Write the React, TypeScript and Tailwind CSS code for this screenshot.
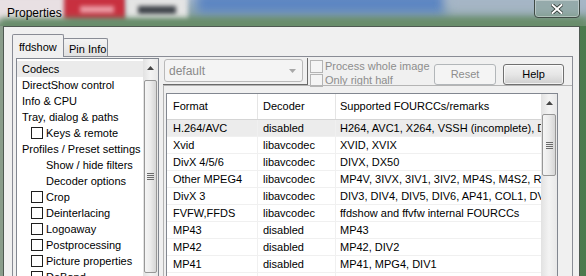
import React from 'react';

type NavItem = { label: string; kind: 'plain' | 'check' | 'sub'; selected?: boolean };

const navItems: NavItem[] = [
  { label: 'Codecs', kind: 'plain', selected: true },
  { label: 'DirectShow control', kind: 'plain' },
  { label: 'Info & CPU', kind: 'plain' },
  { label: 'Tray, dialog & paths', kind: 'plain' },
  { label: 'Keys & remote', kind: 'check' },
  { label: 'Profiles / Preset settings', kind: 'plain' },
  { label: 'Show / hide filters', kind: 'sub' },
  { label: 'Decoder options', kind: 'sub' },
  { label: 'Crop', kind: 'check' },
  { label: 'Deinterlacing', kind: 'check' },
  { label: 'Logoaway', kind: 'check' },
  { label: 'Postprocessing', kind: 'check' },
  { label: 'Picture properties', kind: 'check' },
  { label: 'DeBand', kind: 'check' },
];

const codecs = [
  ['H.264/AVC', 'disabled', 'H264, AVC1, X264, VSSH (incomplete), DAVC, PAVC'],
  ['Xvid', 'libavcodec', 'XVID, XVIX'],
  ['DivX 4/5/6', 'libavcodec', 'DIVX, DX50'],
  ['Other MPEG4', 'libavcodec', 'MP4V, 3IVX, 3IV1, 3IV2, MP4S, M4S2, RMP4, DIVX'],
  ['DivX 3', 'libavcodec', 'DIV3, DIV4, DIV5, DIV6, AP41, COL1, DVX3'],
  ['FVFW,FFDS', 'libavcodec', 'ffdshow and ffvfw internal FOURCCs'],
  ['MP43', 'disabled', 'MP43'],
  ['MP42', 'disabled', 'MP42, DIV2'],
  ['MP41', 'disabled', 'MP41, MPG4, DIV1'],
  ['', '', ''],
];

const UpArrow = () => (
  <svg width="7" height="4" viewBox="0 0 7 4">
    <path d="M0 4 L3.5 0 L7 4 Z" fill="#454545" />
  </svg>
);

const Grip = () => (
  <div className="flex flex-col gap-[1px]">
    <div className="w-[7px] h-[1px] bg-[#6b6b6b]" />
    <div className="w-[7px] h-[1px] bg-[#6b6b6b]" />
    <div className="w-[7px] h-[1px] bg-[#6b6b6b]" />
    <div className="w-[7px] h-[1px] bg-[#6b6b6b]" />
  </div>
);

// win7 style vertical scrollbar, thumb geometry passed as full class strings
const VScroll = ({ thumbClass, width }: { thumbClass: string; width: string }) => (
  <div className={`${width} shrink-0 self-stretch flex flex-col bg-gradient-to-r from-[#e2e2e2] via-[#f3f3f3] to-[#e8e8e8]`}>
    <div className="h-[18px] flex items-center justify-center">
      <UpArrow />
    </div>
    <div
      className={`${thumbClass} mx-[1px] rounded-[2px] border border-[#979797] bg-gradient-to-r from-[#f5f5f5] via-[#ebebeb] to-[#d6d6d6] flex items-center justify-center`}
    >
      <Grip />
    </div>
  </div>
);

const Checkbox = ({ disabled }: { disabled?: boolean }) => (
  <div
    className={
      disabled
        ? 'w-[13px] h-[13px] shrink-0 border border-[#b4b4b4] bg-[#f4f4f4]'
        : 'w-[12px] h-[12px] shrink-0 border border-[#1e1e1e] bg-white'
    }
  />
);

export default function App() {
  return (
    <div
      className="relative w-[586px] h-[276px] overflow-hidden flex flex-col bg-[#6e8f70]"
      style={{ fontFamily: '"Liberation Sans", Arial, sans-serif' }}
    >
      {/* aero glass title bar, blurred desktop behind it */}
      <div className="relative h-[26px] shrink-0 overflow-hidden bg-gradient-to-b from-[#a9b9c9] via-[#8ea6a6] to-[#6f9071]">
        <div className="absolute left-[-10px] top-[-6px] w-[78px] h-[28px] bg-[#e8e0e3] blur-[3px]" />
        <div className="absolute left-[64px] top-[-4px] w-[62px] h-[24px] bg-[#c8303f] blur-[2px]" />
        <div className="absolute left-[80px] top-[6px] w-[34px] h-[7px] bg-[#ea9aa4] blur-[2px]" />
        <div className="absolute left-[126px] top-[-4px] w-[62px] h-[24px] bg-[#e4e4e4] blur-[2px]" />
        <div className="absolute left-[138px] top-[6px] w-[38px] h-[8px] bg-[#3f434a] blur-[2px]" />
        <div className="absolute left-[196px] top-[-8px] w-[250px] h-[22px] bg-[#5a84c2] blur-[6px]" />
        <div className="absolute left-[446px] top-[-8px] w-[150px] h-[20px] bg-[#a5b5c5] blur-[6px]" />
        <div className="absolute left-0 top-[18px] w-[586px] h-[14px] bg-[#698d6b] blur-[3px]" />
        <div className="relative h-full flex items-center pl-[7px] pb-[1px] text-[12px] text-black">Properties</div>
        <div className="absolute top-[-1px] left-[534px] w-[46px] h-[19px] rounded-b-[4px] border border-[#3f4a45] bg-[#8aa39a]/60 flex items-center justify-center shadow-[inset_0_0_0_1px_rgba(255,255,255,0.35)]">
          <svg width="12" height="10" viewBox="0 0 12 10">
            <path d="M1.5 1 L10.5 9 M10.5 1 L1.5 9" stroke="#2c3430" strokeWidth="3.6" strokeLinecap="square" />
            <path d="M1.5 1 L10.5 9 M10.5 1 L1.5 9" stroke="#ffffff" strokeWidth="2" strokeLinecap="square" />
          </svg>
        </div>
      </div>

      {/* window frame */}
      <div className="flex-1 flex pl-[3px] pr-[6px] bg-gradient-to-r from-[#8a9d8b] via-[#6f9071] to-[#4b7a4d]">
        <div className="flex-1 flex flex-col border-l border-t border-r border-[#4f5a52] bg-[#f0f0f0] pl-[8px] pt-[7px] text-[11px] text-black">
          {/* tabs */}
          <div className="h-[22px] flex items-end">
            <div className="relative z-10 h-[23px] mb-[-1px] w-[52px] border border-b-0 border-[#898c95] bg-[#f0f0f0] rounded-t-[2px] pl-[6px] pt-[4px]">
              ffdshow
            </div>
            <div className="h-[18px] w-[45px] ml-[-1px] border border-b-0 border-[#898c95] bg-gradient-to-b from-[#f3f3f3] to-[#e1e1e1] rounded-t-[2px] pl-[5px] pt-[2px]">
              Pin Info
            </div>
          </div>

          {/* tab page */}
          <div className="w-[561px] flex-1 flex border border-[#898c95] pl-[3px] pt-[1px]">
            {/* nav listbox */}
            <div className="w-[143px] h-[240px] shrink-0 flex border border-[#828790] bg-white">
              <div className="flex-1 flex flex-col pt-[2px] overflow-hidden">
                {navItems.map((item) => (
                  <div
                    key={item.label}
                    className={`h-[16px] shrink-0 flex items-center whitespace-nowrap ${item.selected ? 'bg-[#ebebeb]' : ''} ${
                      item.kind === 'plain' ? 'pl-[5px]' : item.kind === 'sub' ? 'pl-[29px]' : 'pl-[14px] gap-[3px]'
                    }`}
                  >
                    {item.kind === 'check' && <Checkbox />}
                    <span>{item.label}</span>
                  </div>
                ))}
              </div>
              <VScroll width="w-[15px]" thumbClass="mt-[3px] h-[193px]" />
            </div>

            {/* codecs page */}
            <div className="ml-[4px] flex-1 flex flex-col">
              <div className="h-[27px] flex">
                <div className="w-[145px] h-[27px] shrink-0 border-r border-b border-[#6a6a6a] pl-[1px] pt-[1px]">
                  <div className="w-[139px] h-[23px] rounded-[3px] border border-[#b9b9b9] bg-[#f4f4f4] flex items-center justify-between pl-[4px] pr-[6px] text-[12px] text-[#8a8a8a]">
                    <span>default</span>
                    <svg width="7" height="4" viewBox="0 0 7 4">
                      <path d="M0 0 L3.5 4 L7 0 Z" fill="#a8a8a8" />
                    </svg>
                  </div>
                </div>
                <div className="w-[124px] ml-[2px] pt-[2px] flex flex-col gap-[1px] text-[#8d8d8d] whitespace-nowrap">
                  <div className="flex items-center gap-[2px] h-[13px]">
                    <Checkbox disabled />
                    <span>Process whole image</span>
                  </div>
                  <div className="flex items-center gap-[2px] h-[13px]">
                    <Checkbox disabled />
                    <span>Only right half</span>
                  </div>
                </div>
                <div className="mt-[6px] w-[62px] h-[21px] rounded-[3px] border border-[#b2b6b9] bg-[#f4f4f4] flex items-center justify-center text-[#8d8d8d]">
                  Reset
                </div>
                <div className="mt-[6px] ml-[7px] w-[61px] h-[21px] rounded-[3px] border border-[#707070] bg-gradient-to-b from-[#f2f2f2] via-[#e6e6e6] to-[#cfcfcf] shadow-[inset_0_0_0_1px_rgba(255,255,255,0.7)] flex items-center justify-center">
                  Help
                </div>
              </div>

              <div className="flex-1 border-l border-t border-[#b4b4b4] pl-[2px] pt-[7px]">
                {/* list view */}
                <div className="w-[392px] h-[200px] flex border border-[#828790] bg-white">
                  <div className="flex-1 flex flex-col overflow-hidden">
                    <div className="h-[26px] shrink-0 flex border-b border-[#d5d5d5]">
                      <div className="w-[91px] shrink-0 pl-[6px] flex items-center border-r border-[#e5e5e5]">Format</div>
                      <div className="w-[78px] shrink-0 pl-[5px] flex items-center border-r border-[#e5e5e5]">Decoder</div>
                      <div className="flex-1 pl-[4px] flex items-center whitespace-nowrap">Supported FOURCCs/remarks</div>
                    </div>
                    {codecs.map((row, i) => (
                      <div
                        key={i}
                        className={`h-[17px] shrink-0 flex border-b border-[#f0f0f0] whitespace-nowrap ${i === 0 ? 'bg-[#ececec]' : ''}`}
                      >
                        <div className="w-[91px] shrink-0 pl-[6px] flex items-center border-r border-[#f0f0f0]">{row[0]}</div>
                        <div className="w-[78px] shrink-0 pl-[5px] flex items-center border-r border-[#f0f0f0]">{row[1]}</div>
                        <div className="flex-1 pl-[4px] flex items-center overflow-hidden">{row[2]}</div>
                      </div>
                    ))}
                  </div>
                  <VScroll width="w-[16px]" thumbClass="mt-[2px] h-[62px]" />
                </div>
              </div>
            </div>
          </div>
        </div>
      </div>
    </div>
  );
}
